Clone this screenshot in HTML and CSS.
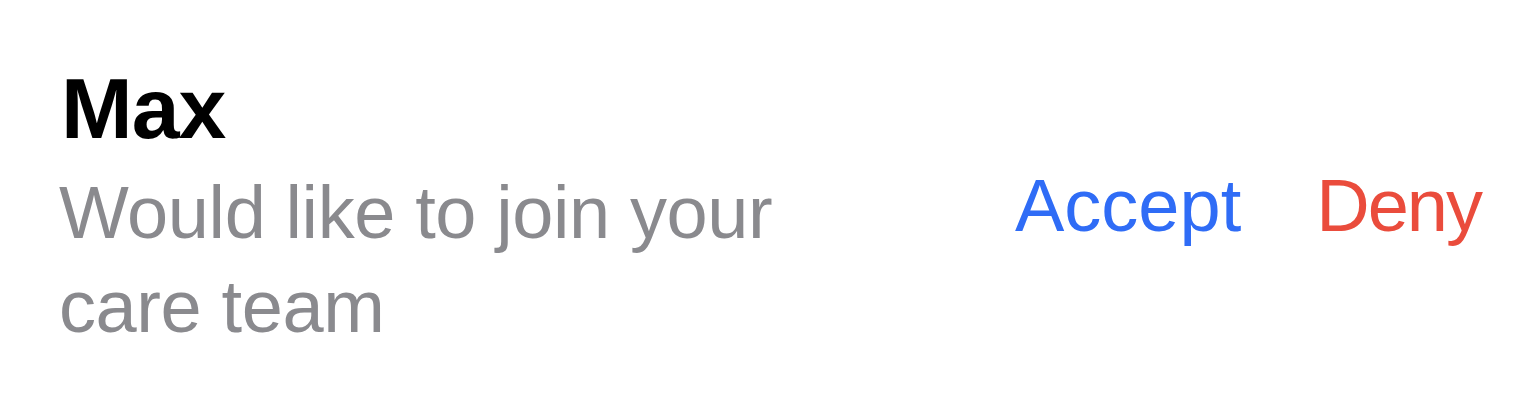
FILE: index.html
```html
<!DOCTYPE html>
<html lang="en">
<head>
<meta charset="utf-8">
<title>Care team request</title>
<link rel="stylesheet" href="styles.css">
</head>
<body>
  <div class="request">
    <div class="info">
      <div class="name">Max</div>
      <div class="desc">Would like to join your<br>care team</div>
    </div>
    <div class="actions">
      <button class="btn accept" type="button">Accept</button>
      <button class="btn deny" type="button">Deny</button>
    </div>
  </div>
</body>
</html>
```

FILE: styles.css
```css
html, body {
  margin: 0;
  padding: 0;
  background: #ffffff;
}

body {
  font-family: "Liberation Sans", Arial, sans-serif;
  width: 1536px;
  height: 408px;
  overflow: hidden;
}

.request {
  display: flex;
  align-items: center;
  justify-content: space-between;
  padding: 58px 55px 53px 59px;
}

.info {
  display: flex;
  flex-direction: column;
}

.name {
  font-size: 86px;
  line-height: 100px;
  font-weight: 700;
  color: #000000;
  margin-left: 2px;
  letter-spacing: -1px;
}

.desc {
  margin-top: 8px;
  font-size: 74px;
  line-height: 94px;
  color: #8a8a8e;
  letter-spacing: -0.4px;
}

.actions {
  display: flex;
  align-items: center;
  gap: 75px;
}

.btn {
  border: none;
  background: none;
  padding: 0;
  margin: 0;
  font-family: inherit;
  font-size: 74px;
  line-height: 94px;
  cursor: pointer;
}

.accept {
  color: #2f6cf6;
}

.deny {
  color: #ea4c3c;
  letter-spacing: -2px;
}
```
